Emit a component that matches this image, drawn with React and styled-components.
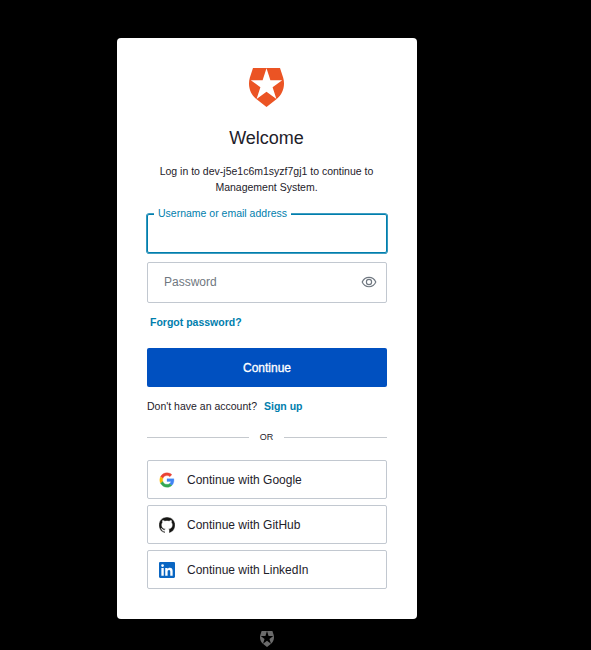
import React from "react";
import styled, { createGlobalStyle } from "styled-components";

const GlobalStyle = createGlobalStyle`
  * { box-sizing: border-box; }
  body {
    margin: 0;
    background: #000;
    font-family: "Liberation Sans", Arial, sans-serif;
    color: #1e212a;
  }
`;

const Page = styled.main`
  width: 534px;
  height: 650px;
  padding-top: 38px;
  display: flex;
  flex-direction: column;
  align-items: center;
  overflow: hidden;
`;

const Card = styled.section`
  width: 300px;
  height: 581px;
  padding: 30px 30px 0;
  background: #fff;
  border-radius: 4px;
  display: flex;
  flex-direction: column;
`;

const Logo = styled.svg`
  display: block;
  flex: none;
  align-self: center;
  width: ${(p) => p.$width}px;
  height: ${(p) => p.$height}px;
  margin-top: ${(p) => p.$top || 0}px;
  margin-right: ${(p) => p.$right || 0}px;
  fill: ${(p) => p.$color};
`;

const Title = styled.h1`
  margin: 19px 1px 0 0;
  font-size: 18px;
  line-height: 24px;
  font-weight: 400;
  text-align: center;
`;

const Description = styled.p`
  margin: 13px 1px 0 0;
  font-size: 10.5px;
  line-height: 16px;
  text-align: center;
  white-space: nowrap;
`;

const Field = styled.label`
  position: relative;
  display: flex;
  align-items: center;
  justify-content: space-between;
  flex: none;
  height: ${(p) => (p.$active ? 39 : 41)}px;
  margin-top: ${(p) => p.$top}px;
  padding: 0 9px 1px 16px;
  border: 1px solid ${(p) => (p.$active ? "#007ead" : "#c2c8d0")};
  box-shadow: ${(p) => (p.$active ? "0 0 0 0.8px #007ead" : "none")};
  border-radius: 2px;
  font-size: 12px;
  color: #6f7780;
`;

const FloatingLabel = styled.span`
  position: absolute;
  top: -9px;
  left: 6px;
  padding: 0 4px;
  background: #fff;
  color: #007ead;
  font-size: 10.5px;
  line-height: 14px;
  white-space: nowrap;
`;

const FieldInput = styled.input`
  min-width: 0;
  flex: 1;
  padding: 0;
  border: 0;
  outline: 0;
  background: transparent;
  font: inherit;
  &::placeholder { color: #6f7780; opacity: 1; }
`;

const EyeIcon = styled.svg`
  display: block;
  width: 16px;
  height: 16px;
  fill: none;
  stroke: #6f7780;
  stroke-width: 1.15;
`;

const Link = styled.a`
  color: #007ead;
  font-size: 10.5px;
  line-height: 14px;
  font-weight: 700;
`;

const Forgot = styled(Link)`
  margin: 12px 0 0 3px;
`;

const Submit = styled.button`
  flex: none;
  height: 39px;
  margin-top: 19px;
  padding: 0;
  border: 0;
  border-radius: 2px;
  background: #0050c0;
  color: #fff;
  font: 400 12px "Liberation Sans", Arial, sans-serif;
  -webkit-text-stroke: 0.3px #fff;
`;

const Signup = styled.p`
  display: flex;
  gap: 7px;
  margin: 12px 0 0;
  font-size: 10.5px;
  line-height: 14px;
`;

const Divider = styled.div`
  display: grid;
  grid-template-columns: 102px 1fr 103px;
  align-items: center;
  height: 14px;
  margin-top: 17px;
  font-size: 9px;
  text-align: center;
  &::before, &::after {
    content: "";
    height: 1px;
    background: #c5c9ce;
  }
`;

const Providers = styled.div`
  display: grid;
  gap: 6px;
  margin-top: 16px;
`;

const Provider = styled.button`
  display: flex;
  align-items: center;
  gap: 12px;
  height: 39px;
  padding: 0 11px;
  border: 1px solid #c2c8d0;
  border-radius: 2px;
  background: #fff;
  color: #1e212a;
  font: 400 12px "Liberation Sans", Arial, sans-serif;
`;

const ProviderIcon = styled.svg`
  display: block;
  width: 16px;
  height: 16px;
`;

const Shield = (props) => (
  <Logo viewBox="0 0 35 39" preserveAspectRatio="none" {...props}>
    <path
      fillRule="evenodd"
      d="M4 0H31L34.2 9.8C36.5 18 33.7 26.4 27.7 31L17.5 39 7.3 31C1.3 26.4-1.5 18 .8 9.8ZM17.5.2L13.6 12.2H1.8L11.4 19.3 7.6 31 17.5 23.8 27.4 31 23.6 19.3 33.2 12.2H21.4Z"
    />
  </Logo>
);

const providers = [
  {
    name: "Google",
    box: "-2.5 -2.5 53 53",
    art: (
      <>
        <path fill="#ea4335" stroke="#ea4335" d="M24 9.5c3.54 0 6.71 1.22 9.21 3.6l6.85-6.85C35.9 2.38 30.47 0 24 0 14.62 0 6.51 5.38 2.56 13.22l7.98 6.19C12.43 13.72 17.74 9.5 24 9.5z" />
        <path fill="#4285f4" stroke="#4285f4" d="M46.98 24.55c0-1.57-.15-3.09-.38-4.55H24v9.02h12.94c-.58 2.96-2.26 5.48-4.78 7.18l7.73 6c4.51-4.18 7.09-10.36 7.09-17.65z" />
        <path fill="#fbbc05" stroke="#fbbc05" d="M10.53 28.59c-.48-1.45-.76-2.99-.76-4.59s.27-3.14.76-4.59l-7.98-6.19C.92 16.46 0 20.12 0 24c0 3.88.92 7.54 2.56 10.78l7.97-6.19z" />
        <path fill="#34a853" stroke="#34a853" d="M24 48c6.48 0 11.93-2.13 15.89-5.81l-7.73-6c-2.15 1.45-4.92 2.3-8.16 2.3-6.26 0-11.57-4.22-13.47-9.91l-7.98 6.19C6.51 42.62 14.62 48 24 48z" />
      </>
    ),
  },
  {
    name: "GitHub",
    box: "0.3 0.3 23.4 23.4",
    art: (
      <path fill="#161614" stroke="#fff" strokeWidth="0.7" d="M12 .297c-6.63 0-12 5.373-12 12 0 5.303 3.438 9.8 8.205 11.385.6.113.82-.258.82-.577 0-.285-.01-1.04-.015-2.04-3.338.724-4.042-1.61-4.042-1.61C4.422 18.07 3.633 17.7 3.633 17.7c-1.087-.744.084-.729.084-.729 1.205.084 1.838 1.236 1.838 1.236 1.07 1.835 2.809 1.305 3.495.998.108-.776.417-1.305.76-1.605-2.665-.3-5.466-1.332-5.466-5.93 0-1.31.465-2.38 1.235-3.22-.135-.303-.54-1.523.105-3.176 0 0 1.005-.322 3.3 1.23.96-.267 1.98-.399 3-.405 1.02.006 2.04.138 3 .405 2.28-1.552 3.285-1.23 3.285-1.23.645 1.653.24 2.873.12 3.176.765.84 1.23 1.91 1.23 3.22 0 4.61-2.805 5.625-5.475 5.92.42.36.81 1.096.81 2.22 0 1.606-.015 2.896-.015 3.286 0 .315.21.69.825.57C20.565 22.092 24 17.592 24 12.297c0-6.627-5.373-12-12-12" />
    ),
  },
  {
    name: "LinkedIn",
    box: "0 0 24 24",
    art: (
      <path fill="#0a66c2" d="M20.447 20.452h-3.554v-5.569c0-1.328-.027-3.037-1.852-3.037-1.853 0-2.136 1.445-2.136 2.939v5.667H9.351V9h3.414v1.561h.046c.477-.9 1.637-1.85 3.37-1.85 3.601 0 4.267 2.37 4.267 5.455v6.286zM5.337 7.433a2.062 2.062 0 0 1-2.063-2.065 2.064 2.064 0 1 1 2.063 2.065zm1.782 13.019H3.555V9h3.564v11.452zM22.225 0H1.771C.792 0 0 .774 0 1.729v20.542C0 23.227.792 24 1.771 24h20.451C23.2 24 24 23.227 24 22.271V1.729C24 .774 23.2 0 22.222 0h.003z" />
    ),
  },
];

export default function App() {
  return (
    <Page>
      <GlobalStyle />
      <Card>
        <Shield $width={35} $height={39} $right={1} $color="#eb5424" />
        <Title>Welcome</Title>
        <Description>
          Log in to dev-j5e1c6m1syzf7gj1 to continue to
          <br />
          Management System.
        </Description>
        <Field $active $top={19}>
          <FloatingLabel>Username or email address</FloatingLabel>
          <FieldInput type="text" />
        </Field>
        <Field $top={9}>
          <FieldInput type="password" placeholder="Password" />
          <EyeIcon viewBox="0 0 16 16">
            <path d="M1.2 8C2.6 4.8 5 3.3 8 3.3S13.4 4.8 14.8 8C13.4 11.2 11 12.7 8 12.7S2.6 11.2 1.2 8z" />
            <circle cx="8" cy="8" r="2.6" />
          </EyeIcon>
        </Field>
        <Forgot>Forgot password?</Forgot>
        <Submit>Continue</Submit>
        <Signup>
          Don't have an account?
          <Link>Sign up</Link>
        </Signup>
        <Divider>OR</Divider>
        <Providers>
          {providers.map(({ name, box, art }) => (
            <Provider key={name}>
              <ProviderIcon viewBox={box}>{art}</ProviderIcon>
              Continue with {name}
            </Provider>
          ))}
        </Providers>
      </Card>
      <Shield $width={14} $height={16} $top={12} $color="#6b6b6b" />
    </Page>
  );
}
